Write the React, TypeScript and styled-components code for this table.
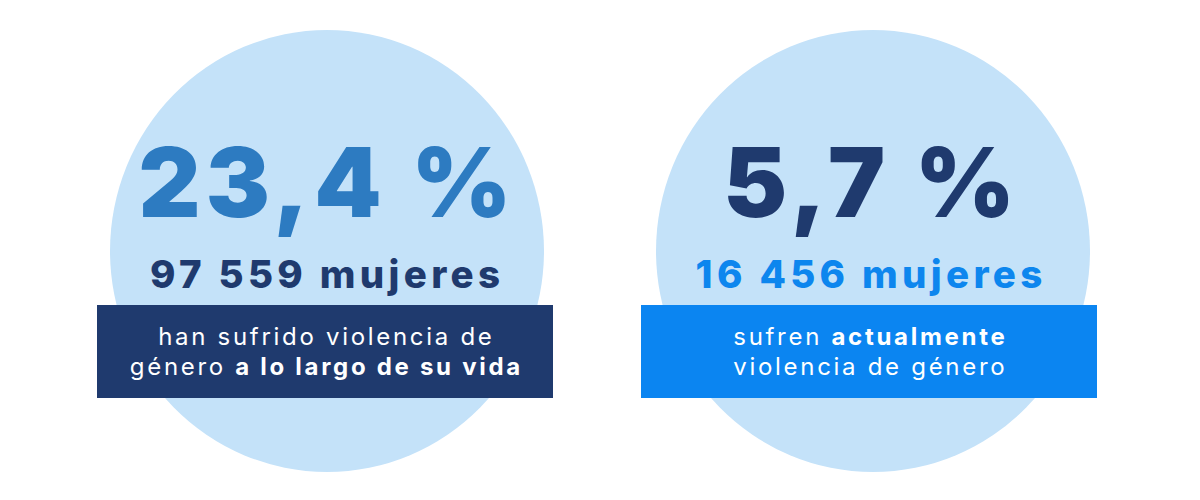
import React from 'react';
import styled, { createGlobalStyle } from 'styled-components';

const GlobalStyle = createGlobalStyle`
  html, body {
    margin: 0;
    padding: 0;
    background: #fff;
  }
  body {
    font-family: Inter, "Open Sans", sans-serif;
  }
`;

const Page = styled.main`
  display: flex;
  justify-content: center;
  gap: 88px;
  height: 500px;
  padding-right: 6px;
  box-sizing: border-box;
`;

const Card = styled.section<{ $shift: number }>`
  position: relative;
  isolation: isolate;
  width: 456px;
  padding-top: 134px;
  display: flex;
  flex-direction: column;
  align-items: center;

  &::before {
    content: '';
    position: absolute;
    z-index: -1;
    top: 30px;
    left: 50%;
    width: 434px;
    height: 442px;
    margin-left: ${(p) => -217 + p.$shift}px;
    border-radius: 50%;
    background: #c4e2f9;
  }
`;

const Percent = styled.div<{ $color: string }>`
  font-size: 96px;
  line-height: 1;
  font-weight: 900;
  letter-spacing: 5.2px;
  padding-left: 5.2px;
  color: ${(p) => p.$color};
  white-space: nowrap;
`;

const Count = styled.div<{ $color: string }>`
  margin-top: 25px;
  font-size: 38.5px;
  line-height: 1;
  font-weight: 800;
  letter-spacing: 4.3px;
  padding-left: 4.3px;
  color: ${(p) => p.$color};
  white-space: nowrap;
`;

const Label = styled.div<{ $bg: string }>`
  margin-top: 11.5px;
  align-self: stretch;
  padding: 17px 0 16px 2.7px;
  background: ${(p) => p.$bg};
  color: #fff;
  font-size: 24px;
  line-height: 30px;
  font-weight: 400;
  text-align: center;
  letter-spacing: 2.7px;
`;

const Strong = styled.strong`
  font-weight: 700;
`;

export default function App() {
  return (
    <>
      <GlobalStyle />
      <Page>
        <Card $shift={2}>
          <Percent $color="#2d7bc1">23,4 %</Percent>
          <Count $color="#1f3a6e">97 559 mujeres</Count>
          <Label $bg="#1f3a6e">
            han sufrido violencia de
            <br />
            género <Strong>a lo largo de su vida</Strong>
          </Label>
        </Card>
        <Card $shift={4}>
          <Percent $color="#1f3a6e">5,7 %</Percent>
          <Count $color="#0d86ee">16 456 mujeres</Count>
          <Label $bg="#0b85f1">
            sufren <Strong>actualmente</Strong>
            <br />
            violencia de género
          </Label>
        </Card>
      </Page>
    </>
  );
}
